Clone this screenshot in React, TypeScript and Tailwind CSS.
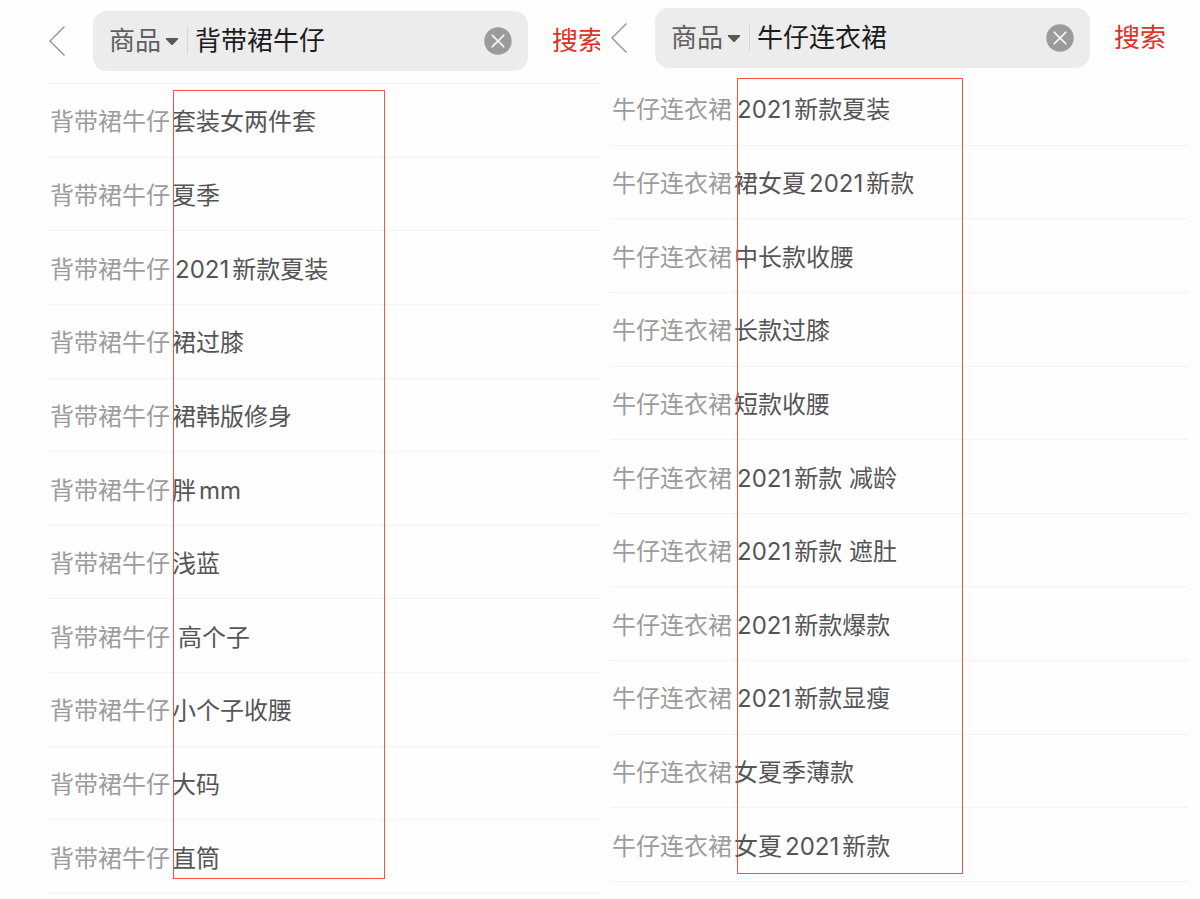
import { useState } from "react";
import clsx from "clsx";

interface Suggestion {
  text: string;
  spaced?: boolean;
}

interface SearchPanelProps {
  id: string;
  keyword: string;
  suggestions: Suggestion[];
  headerClass: string;
  listClass: string;
  highlightClass: string;
}

const overallSuggestions: Suggestion[] = [
  { text: "套装女两件套" },
  { text: "夏季" },
  { text: "2021新款夏装" },
  { text: "裙过膝" },
  { text: "裙韩版修身" },
  { text: "胖mm" },
  { text: "浅蓝" },
  { text: "高个子", spaced: true },
  { text: "小个子收腰" },
  { text: "大码" },
  { text: "直筒" },
];

const dressSuggestions: Suggestion[] = [
  { text: "2021新款夏装" },
  { text: "裙女夏2021新款" },
  { text: "中长款收腰" },
  { text: "长款过膝" },
  { text: "短款收腰" },
  { text: "2021新款 减龄" },
  { text: "2021新款 遮肚" },
  { text: "2021新款爆款" },
  { text: "2021新款显瘦" },
  { text: "女夏季薄款" },
  { text: "女夏2021新款" },
];

function SearchPanel({
  id,
  keyword,
  suggestions,
  headerClass,
  listClass,
  highlightClass,
}: SearchPanelProps) {
  const [query, setQuery] = useState(keyword);

  return (
    <section className="flex min-h-screen min-w-0 flex-col overflow-hidden">
      {/* Search header */}
      <form
        className={clsx("flex items-center", headerClass)}
        onSubmit={(e) => e.preventDefault()}
      >
        <button type="button" aria-label="返回" className="mr-7 shrink-0">
          <svg width="16" height="32" viewBox="0 0 16 32" fill="none">
            <path d="M15.5 1.5L1 16l14.5 14.5" stroke="#8e8e8e" strokeWidth="1.3" />
          </svg>
        </button>

        <div className="flex h-[60px] min-w-0 flex-1 items-center rounded-[14px] bg-[#ececec] pr-4 pl-4">
          <div className="relative flex shrink-0 items-center">
            <select
              aria-label="搜索类型"
              className="w-[70px] appearance-none bg-transparent text-[26px] leading-9 text-[#5f5f61] outline-none"
            >
              <option>商品</option>
            </select>
            <svg
              width="14"
              height="9"
              viewBox="0 0 14 9"
              className="pointer-events-none absolute right-0"
            >
              <path
                d="M1.500 1h11q1.200.2.500 1.200L8 7.500q-1 1-2 0L1 2.200Q.3 1.200 1.500 1z"
                fill="#58585a"
              />
            </svg>
          </div>
          <span className="ml-2 h-[26px] w-px shrink-0 bg-[#d4d4d4]" />
          <input
            id={id}
            aria-label="搜索关键词"
            value={query}
            onChange={(e) => setQuery(e.target.value)}
            className="ml-[7px] min-w-0 flex-1 bg-transparent text-[26px] leading-9 text-[#1c1c1e] outline-none"
          />
          <button
            type="button"
            aria-label="清除"
            className="shrink-0"
            onClick={() => setQuery("")}
          >
            <svg width="28" height="28" viewBox="0 0 28 28" fill="none">
              <circle cx="14" cy="14" r="13.7" fill="#9b9b9b" />
              <path
                d="M8.300 8.300l11.400 11.400M19.700 8.300L8.300 19.700"
                stroke="#f2f2f2"
                strokeWidth="1.800"
                strokeLinecap="round"
              />
            </svg>
          </button>
        </div>

        <button
          type="submit"
          className="ml-6 w-[52px] shrink-0 text-[26px] leading-9 whitespace-nowrap text-[#dc3228]"
        >
          搜索
        </button>
      </form>

      {/* Suggestions */}
      <div className={clsx("relative flex flex-1 flex-col", listClass)}>
        <ul className="flex flex-1 flex-col">
          {suggestions.map(({ text, spaced }) => (
            <li key={text} className="flex flex-1 border-b border-[#f2f2f2]">
              <a
                href={`#${id}`}
                className="flex flex-1 items-center pt-1 pl-0.5 text-2xl whitespace-nowrap text-[#555557]"
              >
                <span className="[text-autospace:normal]">
                  <span className="text-[#9c9c9c]">{keyword}</span>
                  <span className={spaced ? "ml-2" : "ml-0.5"}>{text}</span>
                </span>
              </a>
            </li>
          ))}
        </ul>
        <div
          className={clsx(
            "pointer-events-none absolute border border-[#f8523f]",
            highlightClass
          )}
        />
      </div>
    </section>
  );
}

export default function App() {
  return (
    <main
      lang="zh-CN"
      className="grid min-h-screen grid-cols-2 bg-[#fefefe] font-['Inter','Noto_Sans_CJK_SC',sans-serif]"
    >
      <SearchPanel
        id="overall-query"
        keyword="背带裙牛仔"
        suggestions={overallSuggestions}
        headerClass="-mr-1 pt-[11px] pb-3 pl-[49px]"
        listClass="mb-[5px] ml-12 border-t border-[#efefef]"
        highlightClass="top-[6px] bottom-[15px] left-[125px] w-[212px]"
      />
      <SearchPanel
        id="dress-query"
        keyword="牛仔连衣裙"
        suggestions={dressSuggestions}
        headerClass="pt-2 pr-[34px] pb-1 pl-[11px]"
        listClass="mr-3 mb-[17px] ml-[10px]"
        highlightClass="top-[6px] bottom-2 left-[127px] w-[226px]"
      />
    </main>
  );
}
